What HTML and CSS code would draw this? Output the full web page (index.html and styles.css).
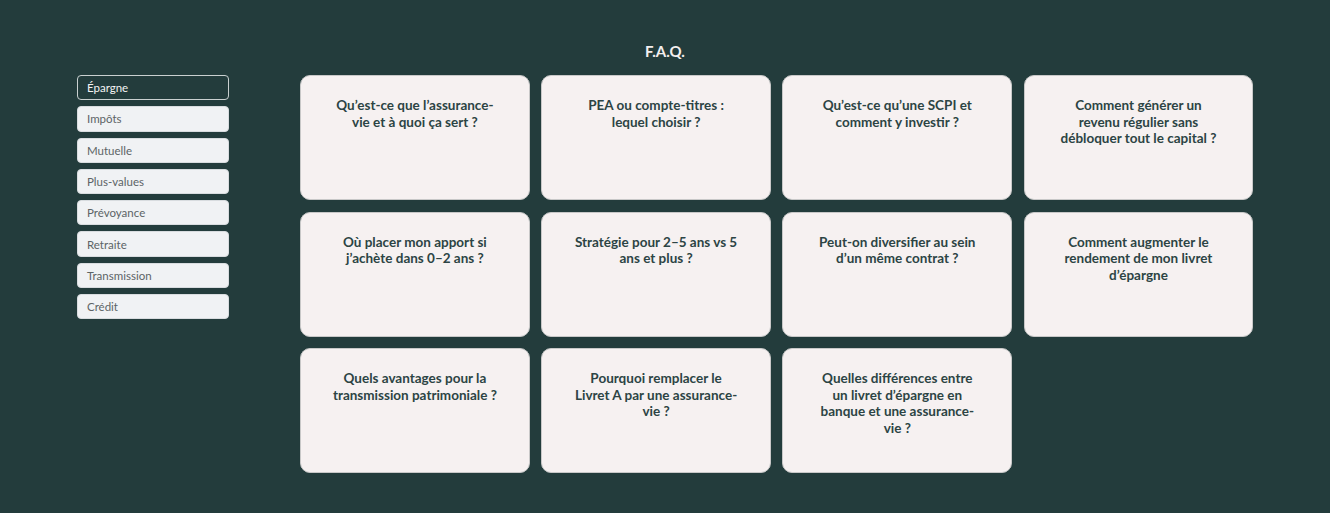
FILE: index.html
```html
<!DOCTYPE html>
<html lang="fr">
  <head>
    <meta charset="UTF-8" />
    <meta name="viewport" content="width=device-width, initial-scale=1.0" />
    <title>F.A.Q.</title>
    <link rel="stylesheet" href="styles.css">
  </head>
  <body>
    <h1 class="faq_title">F.A.Q.</h1>
    <div class="faq_wrap">
      <ul class="faq_menu">
        <li><button class="tab active">Épargne</button></li>
        <li><button class="tab">Impôts</button></li>
        <li><button class="tab">Mutuelle</button></li>
        <li><button class="tab">Plus-values</button></li>
        <li><button class="tab">Prévoyance</button></li>
        <li><button class="tab">Retraite</button></li>
        <li><button class="tab">Transmission</button></li>
        <li><button class="tab">Crédit</button></li>
      </ul>
      <div class="faq_grid">
        <div class="card"><p>Qu’est-ce que l’assurance-vie et à quoi ça sert ?</p></div>
        <div class="card"><p>PEA ou compte-titres : lequel choisir ?</p></div>
        <div class="card"><p>Qu’est-ce qu’une SCPI et comment y investir ?</p></div>
        <div class="card"><p>Comment générer un revenu régulier sans débloquer tout le capital ?</p></div>
        <div class="card"><p>Où placer mon apport si j’achète dans 0–2 ans ?</p></div>
        <div class="card"><p>Stratégie pour 2–5 ans vs 5 ans et plus ?</p></div>
        <div class="card"><p>Peut-on diversifier au sein d’un même contrat ?</p></div>
        <div class="card"><p>Comment augmenter le rendement de mon livret d’épargne</p></div>
        <div class="card"><p>Quels avantages pour la transmission patrimoniale ?</p></div>
        <div class="card"><p>Pourquoi remplacer le Livret A par une assurance-vie ?</p></div>
        <div class="card"><p>Quelles différences entre un livret d’épargne en banque et une assurance-vie ?</p></div>
      </div>
    </div>
  </body>
</html>
```

FILE: styles.css
```css
* {
  box-sizing: border-box;
  padding: 0;
  margin: 0;
}
body {
  font-family: Lato, "Noto Sans", sans-serif;
  background-color: #233c3c;
  color: #2c4444;
  width: 1330px;
  height: 513px;
  overflow: hidden;
}
.faq_title {
  text-align: center;
  color: #f3eeee;
  font-size: 15px;
  font-weight: 700;
  padding-top: 42px;
  height: 75px;
}
.faq_wrap {
  display: flex;
  gap: 71px;
  padding-left: 77px;
}
.faq_menu {
  list-style: none;
  width: 152px;
  display: flex;
  flex-direction: column;
  gap: 6px;
}
.tab {
  width: 100%;
  height: 25.3px;
  text-align: left;
  padding-left: 9px;
  font-family: Lato, "Noto Sans", sans-serif;
  font-size: 11.5px;
  color: #5c6466;
  background-color: #f0f2f4;
  border: 1px solid #d8dcdf;
  border-radius: 4px;
}
.tab.active {
  background-color: #233c3c;
  color: #f3f3f3;
  border: 1px solid #c9d0d0;
}
.faq_grid {
  display: grid;
  grid-template-columns: repeat(4, 229.8px);
  grid-auto-rows: 125px;
  gap: 11.5px 11.4px;
}
.card {
  background-color: #f6f1f1;
  border-radius: 10px;
  border: 1px solid #c8c8c8;
  padding: 21px 31px 0;
  text-align: center;
}
.card p {
  font-size: 13.5px;
  font-weight: 700;
  line-height: 16.5px;
}
```
